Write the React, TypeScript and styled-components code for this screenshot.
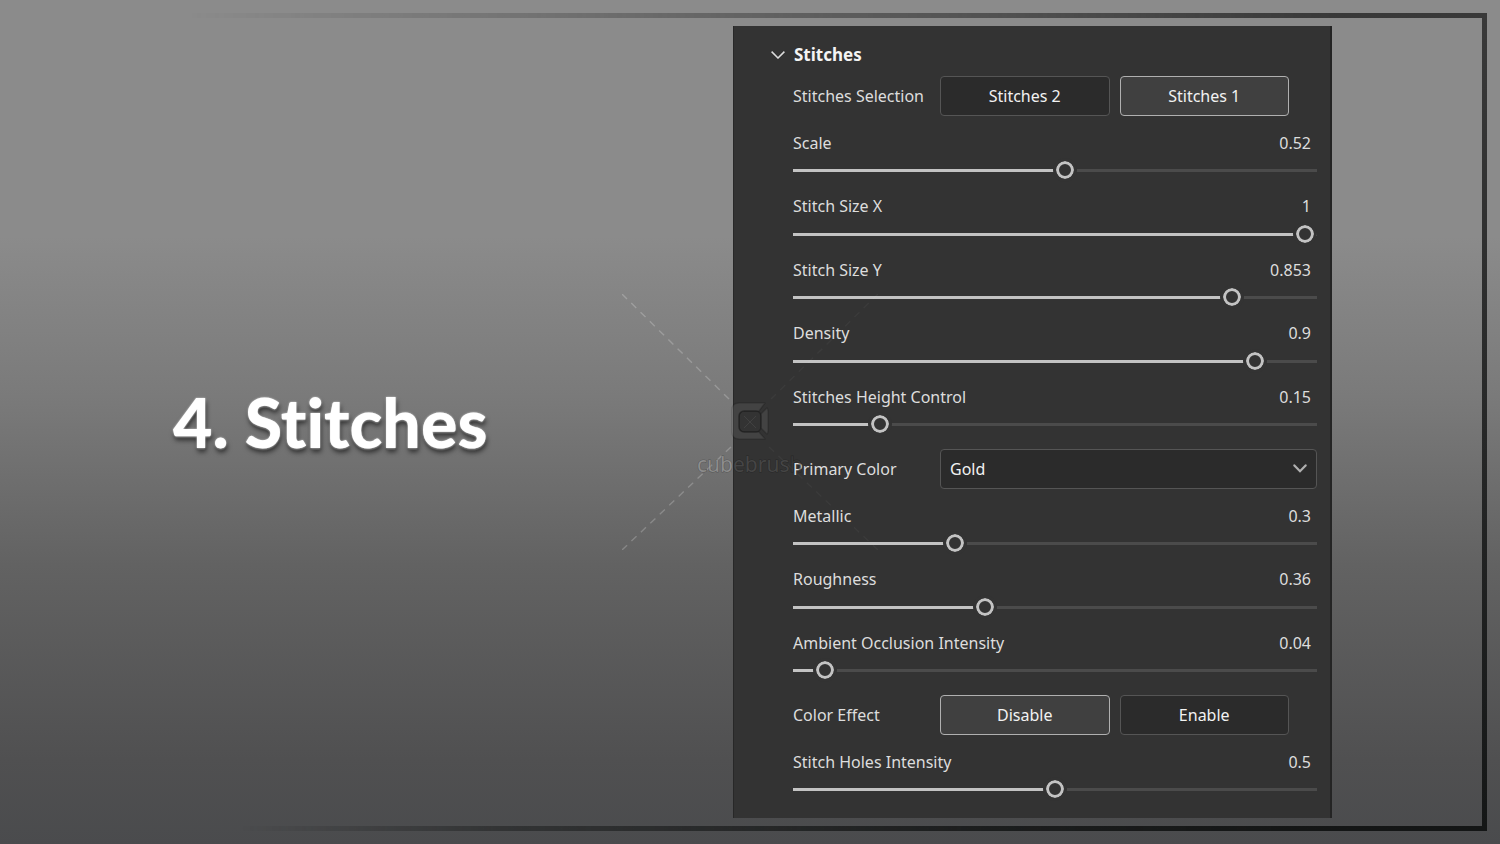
import React, { useState } from 'react';
import styled, { createGlobalStyle } from 'styled-components';

const GlobalStyle = createGlobalStyle`
  * { box-sizing: border-box; }
  body { margin: 0; background: #4b4c4e; }
`;

const panelColor = '#333333';
const uiFont = `Tahoma, 'Noto Sans', 'DejaVu Sans', sans-serif`;

const Page = styled.main`
  position: relative;
  min-height: 100vh;
  padding: 26px 0;
  display: grid;
  grid-template-columns: 733fr minmax(480px, 599fr) 168fr;
  background: linear-gradient(#8b8b8b 0%, #8b8b8b 28%, #7a7a7a 47%, #626262 67%, #505051 90%, #4a4b4d 100%);
  font-family: ${uiFont};
`;

const Frame = styled.div`
  position: absolute;
  inset: 13px 13px 13px 190px;
  border: solid;
  border-width: 5px 5px 5px 0;
  border-image: linear-gradient(#393939, #141616) 5;
  mask-image: linear-gradient(to right, transparent, #000 88%),
    linear-gradient(to right, transparent 4%, rgba(0, 0, 0, 0.45) 24%, rgba(0, 0, 0, 0.85) 60%, #000 85%);
  mask-size: 100% 50%;
  mask-position: top, bottom;
  mask-repeat: no-repeat;
  pointer-events: none;
`;

const TitleArea = styled.header`
  display: flex;
  align-items: center;
  padding-left: 173px;
`;

const Title = styled.h1`
  margin: 0;
  color: #ffffff;
  font: 900 68px/80px Lato, sans-serif;
  font-variant-ligatures: none;
  white-space: nowrap;
  text-shadow: 0 0 2px #dddddd, 0 2px 1px #555555, 1px 4px 5px rgba(0, 0, 0, 0.6);
`;

const Panel = styled.section`
  display: flex;
  flex-direction: column;
  padding: 0 13px 13px 59px;
  background: ${panelColor};
  border-left: 1px solid #282828;
  border-right: 2px solid #242424;
`;

const PanelToggle = styled.button`
  display: flex;
  align-items: center;
  gap: 9px;
  height: 41px;
  margin-left: -22px;
  padding: 17px 0 0;
  border: 0;
  background: none;
  color: #f4f4f4;
  font: 700 17px/24px ${uiFont};
`;

const Rows = styled.div`
  flex: 1;
  display: flex;
  flex-direction: column;
`;

const SliderRow = styled.div`
  flex: 1 0 63px;
  display: flex;
  flex-direction: column;
  gap: 4px;
  padding-top: 8px;
`;

const SliderHead = styled.div`
  display: flex;
  justify-content: space-between;
  padding-right: 6px;
  color: #dddddd;
  font-size: 16px;
  line-height: 24px;
`;

const Range = styled.input`
  appearance: none;
  width: 100%;
  height: 24px;
  margin: 0;
  background: none;

  &::-webkit-slider-runnable-track {
    height: 3px;
    background: linear-gradient(#c3c3c3, #c3c3c3) 0 0 / var(--fill) 100% no-repeat #4b4b4b;
  }

  &::-webkit-slider-thumb {
    appearance: none;
    width: 24px;
    height: 24px;
    margin-top: -11px;
    border: 3px solid ${panelColor};
    border-radius: 50%;
    background: ${panelColor};
    box-shadow: inset 0 0 0 3px #c3c3c3;
  }
`;

const ControlRow = styled.div`
  flex: 1 0 55px;
  display: flex;
  align-items: center;
  padding-top: 2px;
`;

const ControlLabel = styled.label`
  flex: 0 0 147px;
  color: #dddddd;
  font-size: 16px;
  line-height: 24px;
  white-space: nowrap;
`;

const ButtonGroup = styled.div`
  flex: 1;
  display: flex;
  gap: 10px;
  padding-right: 28px;
`;

const Choice = styled.button<{ $active: boolean }>`
  flex: 1 1 0;
  height: 40px;
  border: 1px solid ${(p) => (p.$active ? '#b0b0b0' : '#555555')};
  border-radius: 4px;
  background: ${(p) => (p.$active ? '#404040' : '#2b2b2b')};
  color: #f2f2f2;
  font: 16px/24px ${uiFont};
`;

const SelectBox = styled.div`
  flex: 1;
  display: grid;
  align-items: center;

  & > * { grid-area: 1 / 1; }
  & > svg { justify-self: end; margin-right: 10px; pointer-events: none; }
`;

const Select = styled.select`
  appearance: none;
  width: 100%;
  height: 40px;
  padding: 0 9px;
  border: 1px solid #555555;
  border-radius: 4px;
  background: #2b2b2b;
  color: #f2f2f2;
  font: 16px/24px ${uiFont};
`;

const Watermark = styled.svg`
  position: absolute;
  left: 50%;
  top: 50%;
  transform: translate(-50%, -50%);
  pointer-events: none;
`;

function Slider({ label, initial }: { label: string; initial: number }) {
  const [value, setValue] = useState(initial);
  const id = label.toLowerCase().replace(/ /g, '-');
  return (
    <SliderRow>
      <SliderHead>
        <label htmlFor={id}>{label}</label>
        <output htmlFor={id}>{value}</output>
      </SliderHead>
      <Range
        id={id}
        type="range"
        min={0}
        max={1}
        step={0.001}
        value={value}
        onChange={(e) => setValue(Number(e.target.value))}
        style={{ '--fill': `${value * 100}%` } as React.CSSProperties}
      />
    </SliderRow>
  );
}

function Toggle({ label, options, initial }: { label: string; options: string[]; initial: string }) {
  const [active, setActive] = useState(initial);
  return (
    <ControlRow role="group" aria-label={label}>
      <ControlLabel as="span">{label}</ControlLabel>
      <ButtonGroup>
        {options.map((o) => (
          <Choice key={o} type="button" $active={o === active} aria-pressed={o === active} onClick={() => setActive(o)}>
            {o}
          </Choice>
        ))}
      </ButtonGroup>
    </ControlRow>
  );
}

export default function App() {
  return (
    <>
      <GlobalStyle />
      <Page>
        <Frame />
        <TitleArea>
          <Title>4. Stitches</Title>
        </TitleArea>
        <Panel>
          <PanelToggle type="button" aria-expanded="true">
            <svg width="14" height="8" viewBox="0 0 14 8" fill="none" stroke="#dddddd" strokeWidth="1.5">
              <path d="M.6 .6 7 7l6.4-6.4" />
            </svg>
            Stitches
          </PanelToggle>
          <Rows>
            <Toggle label="Stitches Selection" options={['Stitches 2', 'Stitches 1']} initial="Stitches 1" />
            <Slider label="Scale" initial={0.52} />
            <Slider label="Stitch Size X" initial={1} />
            <Slider label="Stitch Size Y" initial={0.853} />
            <Slider label="Density" initial={0.9} />
            <Slider label="Stitches Height Control" initial={0.15} />
            <ControlRow>
              <ControlLabel htmlFor="primary-color">Primary Color</ControlLabel>
              <SelectBox>
                <Select id="primary-color" defaultValue="Gold">
                  <option>Gold</option>
                </Select>
                <svg width="14" height="9" viewBox="0 0 14 9" fill="none" stroke="#b0b0b0" strokeWidth="2.2" strokeLinecap="round">
                  <path d="m1.4 1.4 5.6 5.8 5.6-5.8" />
                </svg>
              </SelectBox>
            </ControlRow>
            <Slider label="Metallic" initial={0.3} />
            <Slider label="Roughness" initial={0.36} />
            <Slider label="Ambient Occlusion Intensity" initial={0.04} />
            <Toggle label="Color Effect" options={['Disable', 'Enable']} initial="Disable" />
            <Slider label="Stitch Holes Intensity" initial={0.5} />
          </Rows>
        </Panel>
        <Watermark width="256" height="256" viewBox="0 0 256 256" fill="none" aria-hidden="true">
          <g stroke="#ffffff" strokeWidth="1.4" strokeDasharray="7 6">
            <path d="M0 0l110 108M0 256l110-104" strokeOpacity=".22" />
            <path d="M256 0 146 108M256 256 146 152" strokeOpacity=".04" />
          </g>
          <g stroke="#000000" strokeOpacity=".16" strokeWidth="1.5" strokeLinejoin="round">
            <path
              d="M143 109h-26q-7 0-7 7v22q0 7 7 7h26l-6-7h-14q-6 0-6-6v-9q0-6 6-6h14z"
              fill="#ffffff"
              fillOpacity=".08"
            />
            <path d="M145 114q1 1 1 3v20q0 2-1 3l-6-6v-14z" fill="#ffffff" fillOpacity=".08" />
            <rect x="117" y="117" width="22" height="21" rx="5" strokeOpacity=".25" />
          </g>
          <path d="m122 122 12 12m0-12-12 12" stroke="#ffffff" strokeOpacity=".07" />
          <text x="75" y="178" fontFamily="'Noto Sans', sans-serif" fontSize="21" stroke="#000000" strokeOpacity=".25" paintOrder="stroke">
            <tspan fill="#a8a8a8" fillOpacity=".6">cub</tspan>
            <tspan fill="#4c4c4c" fillOpacity=".8">ebrus</tspan>
            <tspan fill="#404040" fillOpacity=".5">h</tspan>
          </text>
        </Watermark>
      </Page>
    </>
  );
}
